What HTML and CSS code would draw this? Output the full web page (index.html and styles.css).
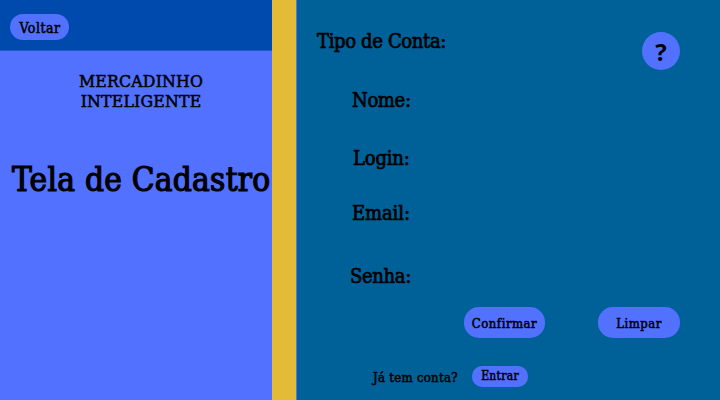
FILE: index.html
```
<!DOCTYPE html>
<html lang="pt-BR">
<head>
<meta charset="utf-8">
<title>Tela de Cadastro</title>
<link rel="stylesheet" href="styles.css">
</head>
<body>
<div class="screen">
  <aside class="side">
    <header class="topbar"><button class="btn back">Voltar</button></header>
    <p class="brand"><span>MERCADINHO</span><br><span class="brand-second">INTELIGENTE</span></p>
    <h1 class="title">Tela de Cadastro</h1>
  </aside>
  <div class="divider"></div>
  <main class="panel">
    <div class="labels">
      <label class="tipo">Tipo de Conta:</label>
      <label class="nome">Nome:</label>
      <label class="login">Login:</label>
      <label class="email">Email:</label>
      <label class="senha">Senha:</label>
    </div>
    <button class="btn help">?</button>
    <div class="actions">
      <button class="btn confirm">Confirmar</button>
      <button class="btn clear">Limpar</button>
    </div>
    <div class="signin">
      <span class="question">Já tem conta?</span>
      <button class="btn enter">Entrar</button>
    </div>
  </main>
</div>
</body>
</html>
```
FILE: styles.css
```
* { box-sizing: border-box; }
body {
  margin: 0;
  color: #000;
  font-family: "DejaVu Serif Condensed", "DejaVu Serif", serif;
  font-stretch: condensed;
  -webkit-text-stroke: 0.5px #000;
}
.screen { display: flex; width: 720px; height: 400px; overflow: hidden; background: #5271ff; }
.side { width: 272px; flex: none; }
.topbar { height: 51px; padding: 14px 0 0 10px; background: #004aad; border-bottom: 1px solid #1f5cca; }
.btn {
  display: flex; align-items: center; justify-content: center;
  padding: 0; border: 0; background: #5271ff; color: #000;
  font: inherit; font-size: 13px; letter-spacing: 0.5px; white-space: nowrap;
  -webkit-text-stroke: inherit;
}
.back { width: 59px; height: 26px; border-radius: 13px; padding-left: 1px; padding-top: 2px; font-size: 14px; }
.brand { margin: 20px 0 0; padding-left: 10px; text-align: center; font-size: 17.5px; line-height: 20px; letter-spacing: 0.2px; }
.title {
  margin: 49px 0 0 12px; font-size: 33px; line-height: 40px; font-weight: 400;
  letter-spacing: 0.3px; white-space: nowrap; -webkit-text-stroke-width: 1.2px;
}
.divider { width: 24px; flex: none; background: #e4bb37; }
.panel {
  flex: 1; margin-left: 1px; background: #006199;
  display: grid; grid-template-columns: 1fr 118px; grid-template-rows: 307px 59px 34px;
}
.labels {
  display: flex; flex-direction: column; align-items: flex-start;
  font-size: 20px; line-height: 26px; letter-spacing: -0.35px; -webkit-text-stroke-width: 0.7px;
}
.labels label { white-space: nowrap; }
.tipo { margin: 28px 0 0 20px; }
.nome { margin: 33px 0 0 55px; }
.login { margin: 32px 0 0 56px; letter-spacing: -0.2px; }
.email { margin: 29px 0 0 55px; letter-spacing: -0.1px; }
.senha { margin: 37px 0 0 53px; }
.help {
  width: 38px; height: 38px; border-radius: 50%; margin: 32px 0 0 40px;
  font: 700 24px "Open Sans", sans-serif; letter-spacing: 0; -webkit-text-stroke-width: 0;
}
.actions { grid-column: 1 / 3; display: flex; padding-left: 167px; gap: 53px; }
.confirm, .clear { width: 81px; height: 31px; border-radius: 15px; padding-top: 1px; }
.clear { width: 82px; }
.signin { grid-column: 1 / 3; display: flex; padding-left: 76px; }
.question { width: 99px; padding-top: 2px; font-size: 13px; line-height: 20px; letter-spacing: 0.3px; white-space: nowrap; }
.enter { width: 56px; height: 21px; border-radius: 10px; font-size: 12px; letter-spacing: 0.3px; padding-bottom: 1px; }
```
